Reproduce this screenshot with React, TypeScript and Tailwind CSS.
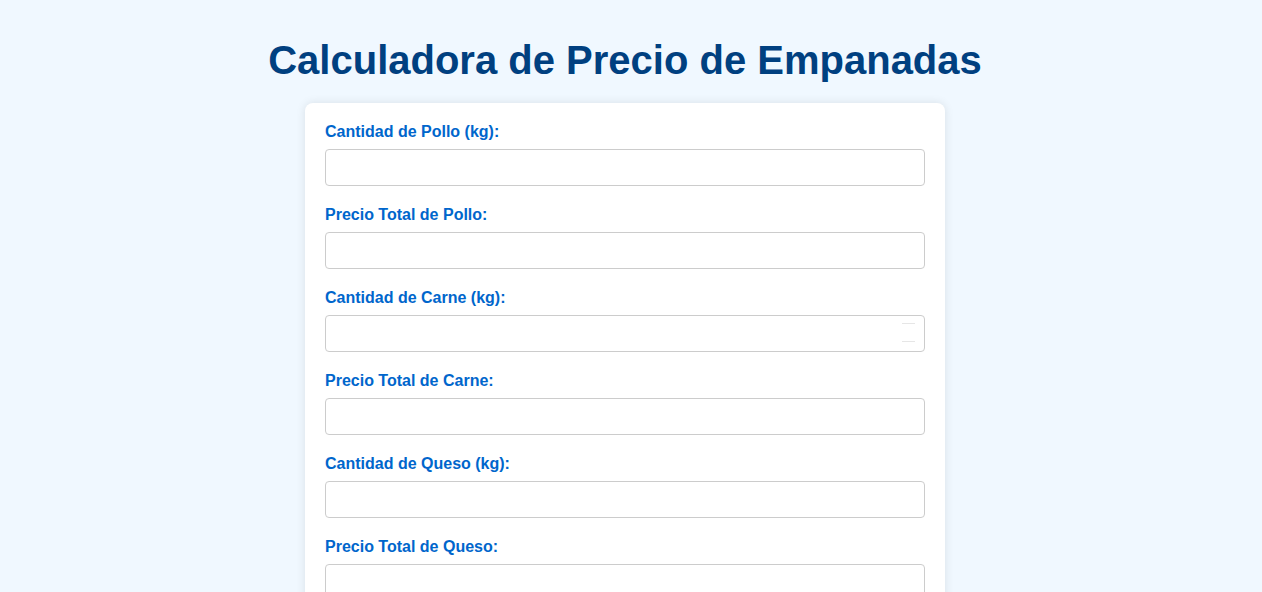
const fields = [
  { label: 'Cantidad de Pollo (kg):' },
  { label: 'Precio Total de Pollo:' },
  { label: 'Cantidad de Carne (kg):', hover: true },
  { label: 'Precio Total de Carne:' },
  { label: 'Cantidad de Queso (kg):' },
  { label: 'Precio Total de Queso:' },
];

export default function App() {
  return (
    <div className="min-h-screen bg-[#f0f8ff] pt-[37px] pr-[32px] pb-5 pl-5 font-['Liberation_Sans',Arial,sans-serif]">
      <h1 className="mb-5 text-center text-[40px] font-bold leading-[46px] text-[#004080]">
        Calculadora de Precio de Empanadas
      </h1>
      <div className="mx-auto w-[640px] rounded-lg bg-white p-5 shadow-[0_0_10px_rgba(0,0,0,0.1)]">
        {fields.map((f) => (
          <div key={f.label}>
            <label className="mb-2 block text-base font-bold leading-[18px] text-[#0066cc]">{f.label}</label>
            <div className="relative mb-5">
              <input
                type="text"
                inputMode="decimal"
                className="block w-full rounded border border-[#ccc] bg-white p-[10px] text-[13.33px] leading-[15px] outline-none"
              />
              {f.hover && (
                <div className="pointer-events-none absolute top-[8px] right-[10px] flex h-[19px] w-[13px] flex-col justify-between">
                  <span className="block h-px w-full bg-[#e6e6e6]" />
                  <span className="block h-px w-full bg-[#e6e6e6]" />
                </div>
              )}
            </div>
          </div>
        ))}
      </div>
    </div>
  );
}
